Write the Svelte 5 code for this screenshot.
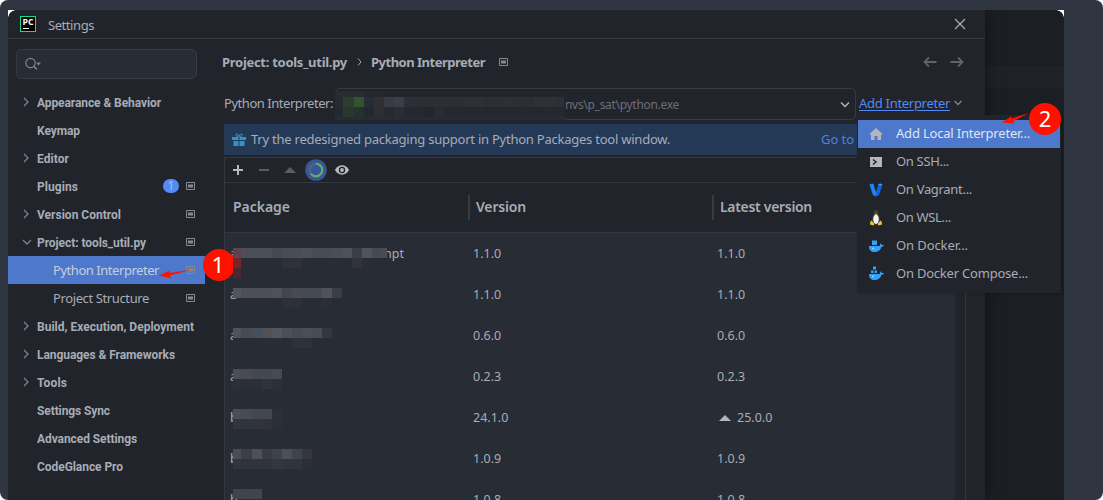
<script lang="ts">
  const treeItems = [
    { label: 'Appearance & Behavior', arrow: 'right', width: 124 },
    { label: 'Keymap', width: 43 },
    { label: 'Editor', arrow: 'right', width: 32 },
    { label: 'Plugins', badge: '1', project: true, width: 41 },
    { label: 'Version Control', arrow: 'right', project: true, width: 84 },
    { label: 'Project: tools_util.py', arrow: 'down', project: true, width: 109 },
    { label: 'Python Interpreter', child: true, project: true, selected: true, width: 106 },
    { label: 'Project Structure', child: true, project: true, width: 96 },
    { label: 'Build, Execution, Deployment', arrow: 'right', width: 157 },
    { label: 'Languages & Frameworks', arrow: 'right', width: 138 },
    { label: 'Tools', arrow: 'right', width: 30 },
    { label: 'Settings Sync', width: 73 },
    { label: 'Advanced Settings', width: 100 },
    { label: 'CodeGlance Pro', width: 86 },
  ];

  const packages = [
    {
      name: 'a', tail: 'npt', version: '1.1.0', latest: '1.1.0', top: 15,
      mask: [
        ['#5d444c', '#4d4f57', '#4b4e57', '#4b4d57', '#464852', '#4b4d56', '#484d57', '#4d5059', '#494b54', '#4a4c55', '#4c4e57', '#50525b', '#3b3d4a', '#50535a', '#484a53', '#4a4c55'],
        ['#782326', '', '', '', '', '#2e3138', '#2e3138', '', '', '', '', '', '#30333a', '#2a2d35'],
        ['#49292f'],
      ],
    },
    {
      name: 'a', version: '1.1.0', latest: '1.1.0', top: 14,
      mask: [
        ['#51545c', '#4d4f58', '#4c4f58', '#4b4d57', '#4f5158', '#44464f', '#484a53', '#454b54', '#484a53', '#50525a', '#3c3e46'],
        ['', '', '', '', '', '#2d3037', '#2d3037', '', '', '#2b2e36'],
      ],
    },
    {
      name: 'a', version: '0.6.0', latest: '0.6.0', top: 13,
      mask: [
        ['#50535b', '#484b51', '#45505e', '#4f5157', '#53575c', '#4a4f59', '#474a51', '#4b4e56', '#484c57', '#34373e'],
        ['#292c33', '', '', '#2a2d34', '#2a2d34', '', '#2e3138', '#2e3138'],
      ],
    },
    {
      name: 'a', version: '0.2.3', latest: '0.2.3', top: 13,
      mask: [
        ['#4b4e54', '#484b54', '#45464e', '#434855', '#474a50'],
        ['#2d3037', '#2c2f36', '#2c2f36', '#30333a', '#2d3037'],
      ],
    },
    {
      name: 'b', version: '24.1.0', latest: '25.0.0', upgrade: true, top: 12,
      mask: [
        ['#4b4e56', '#444b5b', '#47464a', '#434750', '#2e3038'],
        ['#32353c', '#31343b', '#31343b', '#2f3239', '#2c2f36'],
      ],
    },
    {
      name: 'b', version: '1.0.9', latest: '1.0.9', top: 11,
      mask: [
        ['#4a4d53', '#3b3e46', '#4d5059', '#393c43', '#3e424d', '#4c4f59', '#3d444d', '#36373e'],
        ['#32353c', '#30333b', '#31343b', '#31343b', '#34373e', '#31343b', '#31343b', '#2b2e36'],
      ],
    },
    {
      name: 'b', version: '1.0.8', latest: '1.0.8', top: 10,
      mask: [['#41454b', '#40434a', '#41454b']],
    },
  ];

  const pathMask = [
    ['#292b33', '#272e31', '#272e31', '#25292f', '#25282e'],
    ['#292b33', '#2c3e2f', '#365330', '#252e35', '#2e3034', '#393b44', '#3c3e47', '#2c2f36', '#2b2e35', '#2b2e35', '#2c2f36', '#2b2e35', '#2b2e35', '#2d3037', '#2d3037', '#2b2e35', '#2c2f36', '#2d3037', '#2c2f36', '#2b2e35', '#2e3138', '#2e3138', '#2c2f36'],
    ['#25282f', '#29382d', '#28302d', '#23272e', '#2d2f34', '#27292e', '#2a2d34', '#25282f', '#25282f', '#23262d', '#2a2c33', '#25282f', '#25282f', '#24272e', '#25282f', '#24272e', '#24272e', '#25282f', '#25282f', '#25282f', '#24272e', '#25282f', '#25282f'],
  ];

  const menuItems = [
    { label: 'Add Local Interpreter...', icon: 'home', width: 134 },
    { label: 'On SSH...', icon: 'ssh', width: 53 },
    { label: 'On Vagrant...', icon: 'vagrant', width: 76 },
    { label: 'On WSL...', icon: 'linux', width: 55 },
    { label: 'On Docker...', icon: 'docker', width: 72 },
    { label: 'On Docker Compose...', icon: 'compose', width: 132 },
  ];

  // spreads a label evenly so that it takes up the given width
  function fit(node: HTMLElement, width: number) {
    const extra = width - node.getBoundingClientRect().width;
    node.style.letterSpacing = `${extra / (node.textContent ?? ' ').length}px`;
  }
</script>

{#snippet mosaic(rows: string[][])}
  {#each rows as row}
    <div class="mosaic-row">
      {#each row as color}
        <i style:background={color || 'transparent'}></i>
      {/each}
    </div>
  {/each}
{/snippet}

{#snippet projectIcon()}
  <svg class="project-icon" width="9" height="8" viewBox="0 0 9 8">
    <path d="M.5.5h8v7h-8z" fill="none" stroke="#868a91" />
    <path d="M2 2.5h5v3H2z" fill="#868a91" />
  </svg>
{/snippet}

<div class="backdrop">
  <div class="screen">
    <div class="window">
      <header class="titlebar">
        <svg width="16" height="16" viewBox="0 0 16 16">
          <rect x=".5" y=".5" width="15" height="15" fill="#000" stroke="#21d789" />
          <text x="2.5" y="9" textLength="11" lengthAdjust="spacingAndGlyphs" class="logo-text">PC</text>
          <path d="M3 12h6v1H3z" fill="#fff" />
        </svg>
        <span class="title" use:fit={46}>Settings</span>
        <svg class="close" width="12" height="12" viewBox="0 0 12 12">
          <path d="M1 1l10 10M11 1L1 11" stroke="#b4b6b9" stroke-width="1.1" />
        </svg>
      </header>

      <div class="body">
        <aside class="sidebar">
          <div class="search">
            <svg width="18" height="14" viewBox="0 0 18 14">
              <circle cx="5.5" cy="6" r="4.700" fill="none" stroke="#7d828b" stroke-width="1.200" />
              <path d="M8.700 9.200l3.200 3.200" stroke="#7d828b" stroke-width="1.500" />
              <path d="M11 5.500h5L13.500 8.500z" fill="#7d828b" />
            </svg>
          </div>
          <nav class="tree">
            {#each treeItems as item}
              <div class="tree-item" class:child={item.child} class:selected={item.selected}>
                <span class="tree-arrow">
                  {#if item.arrow === 'right'}
                    <svg width="8" height="10" viewBox="0 0 8 10"><path d="M2 1l4 4-4 4" /></svg>
                  {:else if item.arrow === 'down'}
                    <svg width="10" height="10" viewBox="0 0 10 10"><path d="M1 3l4 4 4-4" /></svg>
                  {/if}
                </span>
                <span class="tree-label" use:fit={item.width}>{item.label}</span>
                <span class="spacer"></span>
                {#if item.badge}<span class="badge">{item.badge}</span>{/if}
                {#if item.project}{@render projectIcon()}{/if}
              </div>
            {/each}
          </nav>
        </aside>

        <main class="content">
          <div class="breadcrumb">
            <span use:fit={125}>Project: tools_util.py</span>
            <svg width="6" height="8" viewBox="0 0 6 8"><path d="M1 .5L4 4 1 7.500" fill="none" stroke="#a2a7b0" /></svg>
            <span use:fit={114}>Python Interpreter</span>
            {@render projectIcon()}
            <span class="spacer"></span>
            <svg class="nav-arrows" width="41" height="12" viewBox="0 0 41 12">
              <path d="M13.500 6H1M6 1.500L1.500 6 6 10.500M27.500 6H40M35 1.500L39.500 6 35 10.500" fill="none" stroke="#606367" stroke-width="1.800" />
            </svg>
          </div>

          <div class="interpreter">
            <span class="field-label raised" use:fit={109}>Python Interpreter:</span>
            <div class="combo">
              <div class="path-mask">{@render mosaic(pathMask)}<div class="mask-foot"></div></div>
              <span class="path" use:fit={114}>nvs\p_sat\python.exe</span>
              <span class="spacer"></span>
              <svg width="10" height="8" viewBox="0 0 10 8"><path d="M1 2.500l4 4 4-4" fill="none" stroke="#b0b4bb" stroke-width="1.500" /></svg>
            </div>
            <span class="add-link raised" use:fit={91}>Add Interpreter</span>
            <svg class="add-arrow" width="8" height="6" viewBox="0 0 8 6"><path d="M.5 1L4 4.500 7.500 1" fill="none" stroke="#7d828b" stroke-width="1.500" /></svg>
          </div>

          <div class="banner">
            <svg width="14" height="14" viewBox="0 0 14 14">
              <path d="M0 4h6.500v3H0zM7.500 4H14v3H7.500zM1.500 8h5v5h-5zM7.500 8h5v5h-5z" fill="#3592c4" />
              <path d="M6.500 3.500C4 3.500 3.500 2.500 4 1.500S6.500 1 7 3.500C7.500 1 9.500.5 10 1.500S10 3.500 7.500 3.500" fill="none" stroke="#3592c4" />
            </svg>
            <span class="raised" use:fit={419}>Try the redesigned packaging support in Python Packages tool window.</span>
            <span class="spacer"></span>
            <span class="banner-link raised" use:fit={33}>Go to</span>
          </div>

          <section class="packages">
            <div class="toolbar">
              <svg width="104" height="22" viewBox="0 0 104 22">
                <path d="M8 11h10M13 6v10" stroke="#b4b6b9" stroke-width="2" />
                <path d="M34 11h10" stroke="#5c5d60" stroke-width="2" />
                <path d="M59 14l6-6 6 6z" fill="#5c5d60" />
                <circle cx="91" cy="11" r="10.800" fill="#3c5593" />
                <circle cx="91" cy="11" r="6.300" fill="none" stroke="#4a7d85" stroke-width="2" stroke-dasharray="1.500 1" />
                <path d="M91 4.700a6.300 6.300 0 1 1-5 10.200" fill="none" stroke="#5fad78" stroke-width="2" />
              </svg>
              <svg class="eye" width="14" height="10" viewBox="0 0 14 10">
                <path d="M0 5C3-1.200 11-1.200 14 5 11 11.200 3 11.200 0 5z" fill="#b9bbbe" />
                <circle cx="7" cy="5" r="3.200" fill="#21242b" />
                <circle cx="7" cy="5" r="1.900" fill="#b9bbbe" />
              </svg>
            </div>
            <div class="table-row table-head">
              <span class="col"><span class="raised" use:fit={57}>Package</span></span>
              <span class="col"><span class="raised" use:fit={50}>Version</span></span>
              <span class="col"><span class="raised" use:fit={92}>Latest version</span></span>
            </div>
            <div class="table-body">
              <div class="rows">
                {#each packages as pkg}
                  <div class="table-row">
                    <span class="col">
                      {pkg.name}
                      {#if pkg.tail}<span class="tail">{pkg.tail}</span>{/if}
                      <span class="mask" style:top="{pkg.top}px">{@render mosaic(pkg.mask)}</span>
                    </span>
                    <span class="col">{pkg.version}</span>
                    <span class="col">
                      {#if pkg.upgrade}
                        <svg class="upgrade" width="12" height="6" viewBox="0 0 12 6"><path d="M0 6l6-6 6 6z" fill="#b4b6b9" /></svg>
                      {/if}
                      {pkg.latest}
                    </span>
                  </div>
                {/each}
              </div>
            </div>
          </section>
        </main>
      </div>
    </div>

    <div class="menu">
      {#each menuItems as item, i}
        <div class="menu-item" class:active={i === 0}>
          <svg width="16" height="16" viewBox="0 0 16 16">
            {#if item.icon === 'home'}
              <path d="M8 2l7 6.500h-2V14H9.500v-4h-3v4H3V8.500H1z" fill="#b4b6b9" />
            {:else if item.icon === 'ssh'}
              <path d="M2 3h12v10H2z" fill="#b4b6b9" />
              <path d="M5 5.500L8 8l-3 2.500" fill="none" stroke="#21242b" stroke-width="1.500" />
            {:else if item.icon === 'vagrant'}
              <path d="M1.500 2.500L4 1.500l2 1v2L8 10v4.500L5 13z" fill="#1d84ff" />
              <path d="M14.500 2.500L12 1.500l-2 1v2L8 10v4.500L11 13z" fill="#1563d8" />
              <path d="M10 2.500l2-1 2.500 1-2 1z" fill="#3c9bff" />
            {:else if item.icon === 'linux'}
              <path d="M8 0c-2 0-2.500 1.500-2.300 4C5 6 3.500 8 3.500 11L8 15l4.500-4c0-3-1.500-5-2.200-7C10.500 1.500 10 0 8 0z" fill="#3c3e43" />
              <ellipse cx="8" cy="9.300" rx="2.700" ry="4.600" fill="#f1f1f1" />
              <path d="M6.800 4.300L8 3.600l1.500.7L8 5.500z" fill="#f2b51d" />
              <path d="M3.500 10.500l3 3.500-1 1.500-3.500-1 .2-2.500zM12.500 10.500l-3 3.500 1 1.500 3.500-1-.2-2.500z" fill="#f5c12c" />
            {:else}
              <path d="M1 8h10.500c1-1 .5-2 1-2.800.8.500 1.200 1.200 1.200 1.800H16c-.3 1.300-1.500 1.800-2.600 1.800C12.500 12.500 10 14 6.500 14 3 14 1 12 1 8z" fill="#35a0f4" />
              <circle cx="5" cy="10.500" r="1" fill="#9dd3fb" />
              {#if item.icon === 'docker'}
                <path d="M4 2.500h5V7H4z" fill="#35a0f4" />
              {:else}
                <path d="M3 4.500h2.500V7H3zM6.500 4.500H9V7H6.500zM5 .5h3v3H5z" fill="#35a0f4" />
              {/if}
            {/if}
          </svg>
          <span class="raised" use:fit={item.width}>{item.label}</span>
        </div>
      {/each}
    </div>
  </div>

  <svg class="callout first" width="74" height="34" viewBox="0 0 74 34">
    <path d="M0 27.500L10.500 22.500l-.5 2.500 23-3.200-22 5.500 1 3z" fill="#f10" />
    <circle cx="60" cy="17" r="16" fill="#f10" />
    <text x="59" y="25">1</text>
  </svg>
  <svg class="callout second" width="60" height="34" viewBox="0 0 60 34">
    <path d="M0 20.500l9.500-6.500-.3 2.500L27 11l-16 8.500 1.300 2z" fill="#f10" />
    <circle cx="43" cy="17" r="16" fill="#f10" />
    <text x="43" y="25">2</text>
  </svg>
</div>

<style>
  :global(body) {
    background: #fff;
    overflow: hidden;
  }

  .backdrop {
    position: relative;
    box-sizing: border-box;
    width: 1103px;
    height: 500px;
    padding: 10px 39px 0 8px;
    overflow: hidden;
    border-radius: 8px;
    background: #2f3541;
    color: #a7acb6;
    font-family: "Noto Sans", sans-serif;
    font-size: 13px;
    line-height: 18px;
    white-space: nowrap;
  }

  .backdrop :global(svg) {
    flex: none;
  }

  .screen {
    position: relative;
    height: 490px;
    background: linear-gradient(#1b1e22 56px, #1e2128 56px 78px, #1b1e22 78px);
  }

  .screen::before {
    content: "";
    position: absolute;
    inset: 0;
    background:
      radial-gradient(circle at 8px 8px, transparent 7.5px, #fff 8px) 0 0 / 8px 8px no-repeat,
      radial-gradient(circle at 0 8px, transparent 7.5px, #fff 8px) 100% 0 / 8px 8px no-repeat;
    z-index: 2;
  }

  .window {
    display: flex;
    flex-direction: column;
    width: 977px;
    height: 490px;
    background: #21242b;
    box-shadow: 0 0 16px rgba(0, 0, 0, 0.4);
    clip-path: inset(0 -20px 0 0);
  }

  .titlebar {
    display: flex;
    align-items: center;
    height: 28px;
    padding: 0 19px 0 12px;
    border-bottom: 1px solid #363940;
  }

  .title {
    margin-left: 12px;
    padding-top: 1px;
  }

  .logo-text {
    font: 700 8.5px "Open Sans", sans-serif;
    fill: #fff;
  }

  .close {
    margin-left: auto;
  }

  .body {
    display: flex;
    flex: 1;
    min-height: 0;
  }

  .sidebar {
    width: 197px;
    margin-right: 17px;
    padding-top: 10px;
  }

  .search {
    display: flex;
    align-items: center;
    box-sizing: border-box;
    width: 181px;
    height: 30px;
    margin: 0 8px 9px;
    padding-left: 8px;
    border: 1px solid #383b43;
    border-radius: 5px;
    background: #282c34;
  }

  .tree-item {
    display: flex;
    align-items: center;
    height: 28px;
    padding: 0 10px 0 14px;
    font: 700 12px/18px Roboto, sans-serif;
  }

  .tree-arrow {
    display: flex;
    width: 15px;
  }

  .tree-arrow path {
    fill: none;
    stroke: #7d828b;
    stroke-width: 1.3;
  }

  .tree-label {
    padding-top: 2px;
  }

  .child {
    padding-left: 30px;
    font: 400 13px/18px "Noto Sans", sans-serif;
  }

  .child .tree-label {
    padding: 0;
  }

  .selected {
    background: #4d78cc;
    color: #c7cedb;
  }

  .spacer {
    flex: 1;
  }

  .raised {
    padding-bottom: 2px;
  }

  .badge {
    width: 16px;
    height: 14px;
    margin-right: 7px;
    border-radius: 7px;
    background: #548af7;
    color: #a9c0ea;
    font: 400 12px/14px "Noto Sans", sans-serif;
    text-align: center;
  }

  .content {
    display: flex;
    flex-direction: column;
    flex: 1;
    min-width: 0;
  }

  .breadcrumb {
    display: flex;
    align-items: center;
    height: 46px;
    padding-right: 21px;
    font-weight: 700;
  }

  .breadcrumb > svg:first-of-type {
    margin: 0 8px 0 10px;
  }

  .breadcrumb .project-icon {
    margin-left: 14px;
  }

  .interpreter {
    display: flex;
    align-items: center;
    height: 38px;
    padding-left: 2px;
  }

  .combo {
    position: relative;
    display: flex;
    align-items: center;
    box-sizing: border-box;
    width: 521px;
    height: 32px;
    margin: 0 3px 0 2px;
    padding: 0 5px 0 229px;
    border: 1px solid #383b42;
    border-radius: 5px;
    color: #6a6f78;
    font-size: 12px;
  }

  .path {
    padding-top: 2px;
  }

  .path-mask {
    position: absolute;
    top: 2px;
    left: -1px;
    width: 231px;
    height: 29px;
    overflow: hidden;
    background: #23262d;
  }

  .path-mask .mosaic-row:first-child {
    height: 6px;
    overflow: hidden;
  }

  .mask-foot {
    height: 3px;
    background: #222c3a;
  }

  .mosaic-row {
    display: flex;
    height: 10px;
  }

  .mosaic-row i {
    flex: none;
    width: 10px;
  }

  .mosaic-row i:first-child {
    width: 8px;
  }

  .mosaic-row i:nth-child(2) {
    width: 11px;
  }

  .add-link {
    color: #548af7;
    text-decoration: underline;
    text-underline-offset: 2px;
  }

  .add-arrow {
    margin: 0 0 2px 4px;
  }

  .banner {
    display: flex;
    align-items: center;
    width: 630px;
    height: 31px;
    margin: 1px 0 2px 2px;
    padding-right: 3px;
    background: #243956;
  }

  .banner svg {
    margin: 0 5px 0 8px;
  }

  .banner-link {
    color: #4e82d8;
  }

  .packages {
    box-sizing: border-box;
    display: flex;
    flex-direction: column;
    flex: 1;
    width: 742px;
    min-height: 0;
    margin-left: 2px;
    border: 1px solid #34373e;
    border-bottom: 0;
  }

  .toolbar {
    display: flex;
    align-items: center;
    height: 24px;
    border-bottom: 1px solid #34373e;
  }

  .eye {
    margin-left: 6px;
  }

  .table-row {
    display: grid;
    grid-template-columns: 243px 244px 1fr;
    align-items: center;
    height: 41px;
    padding-left: 5px;
  }

  .table-row .col {
    position: relative;
    display: flex;
    align-items: center;
    height: 41px;
    font-size: 12.5px;
  }

  .table-head {
    height: 49px;
    padding-left: 0;
    border-bottom: 1px solid #34373e;
  }

  .table-row.table-head .col {
    height: 25px;
    padding-left: 6px;
    border-left: 2px solid #383b40;
    font-size: 14px;
    font-weight: 600;
  }

  .table-row.table-head .col:first-child {
    padding-left: 8px;
    border: 0;
  }

  .table-body {
    flex: 1;
    min-height: 0;
    padding-right: 10px;
  }

  .rows {
    height: 100%;
    overflow: hidden;
    background: #282c34;
  }

  .tail {
    margin-left: 147px;
  }

  .mask {
    position: absolute;
    left: 3px;
    max-width: 154px;
    overflow: hidden;
  }

  .upgrade {
    margin: 0 6px 0 2px;
  }

  .menu {
    position: absolute;
    top: 105px;
    left: 849px;
    box-sizing: border-box;
    width: 204px;
    height: 178px;
    padding: 5px 1px;
    background: #21242b;
    box-shadow: 2px 1px 3px rgba(0, 0, 0, 0.15);
  }

  .menu-item {
    display: flex;
    align-items: center;
    gap: 12px;
    height: 28px;
    padding-left: 10px;
  }

  .active {
    background: #4d78cc;
    color: #dfe6f3;
  }

  .callout {
    position: absolute;
    font-size: 22px;
    fill: #fff;
    text-anchor: middle;
  }

  .first {
    top: 248px;
    left: 159px;
  }

  .second {
    top: 102px;
    left: 1002px;
  }
</style>
